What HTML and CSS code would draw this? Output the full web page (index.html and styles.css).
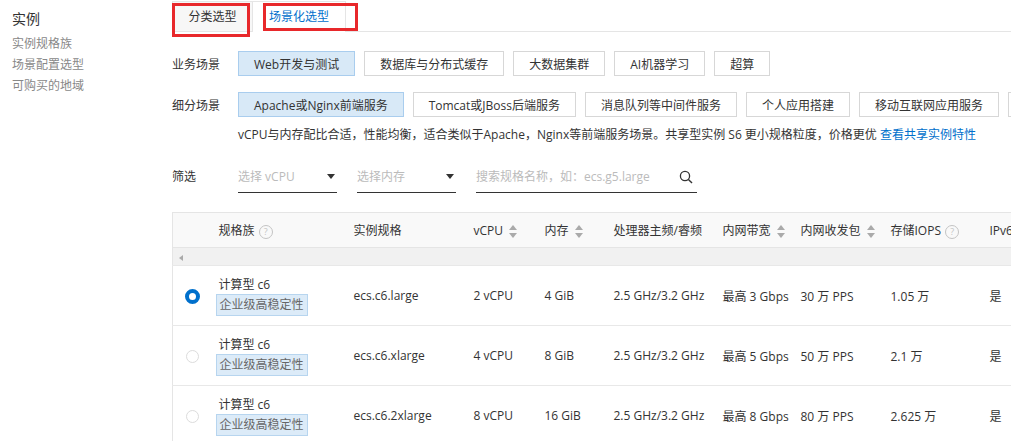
FILE: index.html
```html
<!DOCTYPE html>
<html lang="zh-CN">
<head>
  <meta charset="UTF-8">
  <title>实例规格选型</title>
  <link rel="stylesheet" href="styles.css">
</head>
<body>
  <div class="side">
    <h3>实例</h3>
    <div class="side-item">实例规格族</div>
    <div class="side-item">场景配置选型</div>
    <div class="side-item">可购买的地域</div>
  </div>

  <div class="main">
    <div class="tabs">
      <div class="tab">分类选型</div>
      <div class="tab active">场景化选型</div>
      <span class="mark mark-a"></span>
      <span class="mark mark-b"></span>
    </div>

    <div class="scene-row first">
      <span class="row-label">业务场景</span>
      <button class="opt selected">Web开发与测试</button>
      <button class="opt">数据库与分布式缓存</button>
      <button class="opt">大数据集群</button>
      <button class="opt">AI机器学习</button>
      <button class="opt">超算</button>
    </div>

    <div class="scene-row">
      <span class="row-label">细分场景</span>
      <button class="opt selected">Apache或Nginx前端服务</button>
      <button class="opt">Tomcat或JBoss后端服务</button>
      <button class="opt">消息队列等中间件服务</button>
      <button class="opt">个人应用搭建</button>
      <button class="opt">移动互联网应用服务</button>
      <button class="opt more" aria-label="更多"></button>
    </div>

    <p class="desc">vCPU与内存配比合适，性能均衡，适合类似于Apache，Nginx等前端服务场景。共享型实例 S6 更小规格粒度，价格更优 <a href="#">查看共享实例特性</a></p>

    <div class="filter-row">
      <span class="row-label">筛选</span>
      <div class="select">
        <span class="ph">选择 vCPU</span>
        <span class="caret"></span>
      </div>
      <div class="select">
        <span class="ph">选择内存</span>
        <span class="caret"></span>
      </div>
      <div class="search">
        <span class="ph">搜索规格名称，如：ecs.g5.large</span>
        <svg width="14" height="14" viewBox="0 0 14 14"><circle cx="6" cy="6" r="4.6" fill="none" stroke="#333" stroke-width="1.3"/><line x1="9.4" y1="9.4" x2="13" y2="13" stroke="#333" stroke-width="1.4"/></svg>
      </div>
    </div>

    <table class="spec">
      <colgroup>
        <col style="width:36px"><col style="width:135px"><col style="width:120px"><col style="width:71px"><col style="width:69px">
        <col style="width:109px"><col style="width:78px"><col style="width:90px"><col style="width:99px"><col style="width:80px">
      </colgroup>
      <thead>
        <tr>
          <th></th>
          <th>规格族 <span class="qm">?</span></th>
          <th>实例规格</th>
          <th>vCPU <span class="sort"></span></th>
          <th>内存 <span class="sort"></span></th>
          <th>处理器主频/睿频</th>
          <th>内网带宽 <span class="sort"></span></th>
          <th>内网收发包 <span class="sort"></span></th>
          <th>存储IOPS <span class="qm">?</span></th>
          <th>IPv6</th>
        </tr>
        <tr class="scroll">
          <td colspan="10"><span class="arrow-left"></span></td>
        </tr>
      </thead>
      <tbody>
        <tr>
          <td><span class="radio checked"></span></td>
          <td><div class="fam">计算型 c6</div><span class="tag">企业级高稳定性</span></td>
          <td>ecs.c6.large</td>
          <td>2 vCPU</td>
          <td>4 GiB</td>
          <td>2.5 GHz/3.2 GHz</td>
          <td>最高 3 Gbps</td>
          <td>30 万 PPS</td>
          <td>1.05 万</td>
          <td>是</td>
        </tr>
        <tr>
          <td><span class="radio"></span></td>
          <td><div class="fam">计算型 c6</div><span class="tag">企业级高稳定性</span></td>
          <td>ecs.c6.xlarge</td>
          <td>4 vCPU</td>
          <td>8 GiB</td>
          <td>2.5 GHz/3.2 GHz</td>
          <td>最高 5 Gbps</td>
          <td>50 万 PPS</td>
          <td>2.1 万</td>
          <td>是</td>
        </tr>
        <tr>
          <td><span class="radio"></span></td>
          <td><div class="fam">计算型 c6</div><span class="tag">企业级高稳定性</span></td>
          <td>ecs.c6.2xlarge</td>
          <td>8 vCPU</td>
          <td>16 GiB</td>
          <td>2.5 GHz/3.2 GHz</td>
          <td>最高 8 Gbps</td>
          <td>80 万 PPS</td>
          <td>2.625 万</td>
          <td>是</td>
        </tr>
      </tbody>
    </table>
  </div>
</body>
</html>
```

FILE: styles.css
```css
html, body {
  overflow: hidden;
}

body {
  margin: 0;
  display: flex;
  font-family: "Open Sans", "Noto Sans CJK SC", sans-serif;
  font-size: 12px;
  color: #333;
  background: #fff;
}

.side {
  width: 172px;
  flex-shrink: 0;
  padding: 10px 0 0 12px;
  box-sizing: border-box;
}

.side h3 {
  margin: 0 0 5px;
  font-size: 14px;
  line-height: 18px;
  font-weight: normal;
  color: #333;
}

.side-item {
  line-height: 21px;
  color: #888;
}

.main {
  flex-shrink: 0;
  width: 900px;
}

/* tabs */
.tabs {
  position: relative;
  display: flex;
  height: 30px;
  margin-top: 1px;
  border-bottom: 1px solid #e5e5e5;
}

.tab {
  width: 81px;
  text-align: center;
  line-height: 29px;
  background: #f7f7f7;
  border: 1px solid #e5e5e5;
  border-bottom: none;
  box-sizing: border-box;
  font-size: 12px;
}

.tab.active {
  width: 93px;
  background: #fff;
  color: #0070cc;
  border-left: none;
  margin-bottom: -1px;
  height: 31px;
}

.mark {
  position: absolute;
  border: 3px solid #e8282b;
  box-sizing: border-box;
}

.mark-a {
  left: 0;
  top: 2px;
  width: 78px;
  height: 34px;
}

.mark-b {
  left: 91px;
  top: 2px;
  width: 95px;
  height: 28px;
}

/* scene rows */
.scene-row {
  display: flex;
  align-items: center;
  margin-top: 16px;
  white-space: nowrap;
}

.scene-row.first {
  margin-top: 19px;
}

.row-label {
  width: 66px;
  flex-shrink: 0;
}

.opt {
  flex-shrink: 0;
  height: 25px;
  padding: 0 15px;
  margin-right: 9px;
  border: 1px solid #d7d7d7;
  background: #fff;
  color: #333;
  font-family: inherit;
  font-size: 12px;
  cursor: pointer;
}

.opt.more {
  width: 60px;
}

.opt.selected {
  background: #d8e9f7;
  border-color: #a9cdee;
}

.desc {
  margin: 10px 0 0 66px;
  line-height: 16px;
  white-space: nowrap;
}

.desc a {
  color: #0070cc;
  text-decoration: none;
}

/* filter */
.filter-row {
  display: flex;
  align-items: flex-start;
  margin-top: 24px;
}

.filter-row .row-label {
  line-height: 20px;
}

.select, .search {
  display: flex;
  align-items: center;
  justify-content: space-between;
  height: 26px;
  padding-bottom: 6px;
  line-height: 20px;
  border-bottom: 1px solid #333;
  box-sizing: border-box;
  margin-right: 20px;
}

.select {
  width: 99px;
}

.search {
  width: 221px;
  padding-right: 4px;
}

.ph {
  color: #bbb;
}

.caret {
  width: 0;
  height: 0;
  margin-right: 2px;
  border-left: 4px solid transparent;
  border-right: 4px solid transparent;
  border-top: 5px solid #333;
}

/* table */
.spec {
  margin-top: 19px;
  table-layout: fixed;
  border-collapse: collapse;
  width: 887px;
  border-left: 1px solid #e5e5e5;
  border-top: 1px solid #e5e5e5;
}

.spec th {
  height: 34px;
  padding: 0 0 0 10px;
  text-align: left;
  font-weight: normal;
  background: #f9f9f9;
  white-space: nowrap;
}

.spec th:first-child,
.spec td:first-child {
  padding: 0;
  text-align: center;
}

.spec .scroll td {
  height: 16px;
  padding: 0;
  background: #f1f1f1;
  border-top: 1px solid #e5e5e5;
  text-align: left;
}

.arrow-left {
  display: inline-block;
  margin-left: 6px;
  border-top: 3px solid transparent;
  border-bottom: 3px solid transparent;
  border-right: 4px solid #aaa;
  vertical-align: middle;
}

.spec tbody td {
  height: 59px;
  padding: 0 0 0 10px;
  border-top: 1px solid #e8e8e8;
  white-space: nowrap;
}

.fam {
  line-height: 18px;
  margin-top: 1px;
}

.tag {
  display: inline-block;
  margin-left: -3px;
  padding: 0 3px;
  line-height: 20px;
  color: #666;
  background: #dcebf8;
  border: 1px solid #b7d5ef;
}

.radio {
  display: inline-block;
  width: 13px;
  height: 13px;
  border: 1px solid #dcdcdc;
  border-radius: 50%;
  box-sizing: border-box;
  vertical-align: middle;
  margin-left: 4px;
}

.radio.checked {
  width: 15px;
  height: 15px;
  border: 4px solid #0070cc;
}

.qm {
  display: inline-block;
  width: 12px;
  height: 12px;
  line-height: 11px;
  border: 1px solid #c4c4c4;
  border-radius: 50%;
  color: #c4c4c4;
  font-size: 9px;
  text-align: center;
  vertical-align: middle;
  margin-left: 1px;
}

.sort {
  display: inline-block;
  position: relative;
  width: 8px;
  height: 13px;
  vertical-align: middle;
  margin-left: 3px;
}

.sort::before,
.sort::after {
  content: "";
  position: absolute;
  left: 0;
  border-left: 4px solid transparent;
  border-right: 4px solid transparent;
}

.sort::before {
  top: 0;
  border-bottom: 5px solid #aaa;
}

.sort::after {
  bottom: 0;
  border-top: 5px solid #aaa;
}
```
